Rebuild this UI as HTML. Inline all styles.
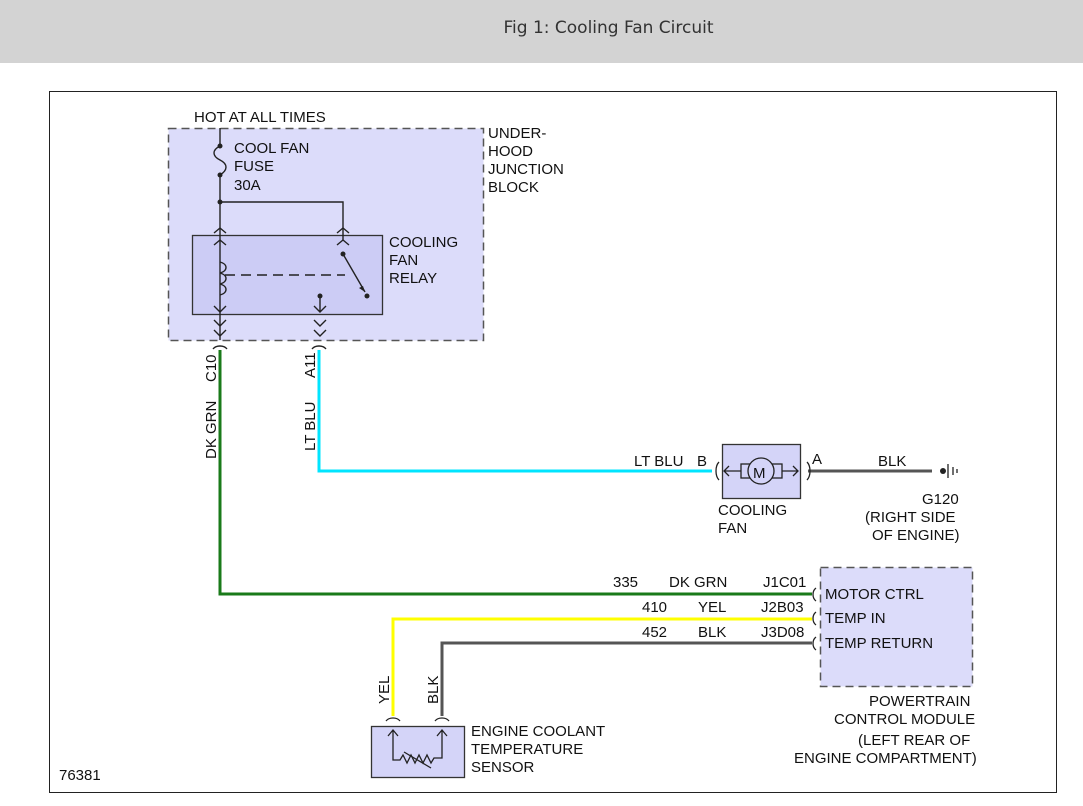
<!DOCTYPE html>
<html><head><style>
body{margin:0;width:1083px;height:806px;background:#fff;overflow:hidden;font-family:"Liberation Sans",sans-serif}
.t{position:absolute;left:0;top:0;width:1083px;height:63px;background:#d3d3d3;color:#333;font-family:"DejaVu Sans",sans-serif;font-size:17px;text-align:center;line-height:57px;padding-left:134px;box-sizing:border-box}
svg{position:absolute;left:0;top:0}
text{font-family:"Liberation Sans",sans-serif;font-size:15px;fill:#111}
</style></head><body>
<div class="t">Fig 1: Cooling Fan Circuit</div>
<svg width="1083" height="806" viewBox="0 0 1083 806">
<rect x="49.5" y="91.5" width="1007" height="701" fill="none" stroke="#222" stroke-width="1"/>
<rect x="168.5" y="128.5" width="315" height="212" fill="#dcdcfa" stroke="#555" stroke-width="1.5" stroke-dasharray="8,5"/>
<rect x="192.5" y="235.5" width="190" height="79" fill="#ccccf5" stroke="#333" stroke-width="1.3"/>
<text x="194" y="122">HOT AT ALL TIMES</text>
<text x="234" y="153">COOL FAN</text><text x="234" y="171">FUSE</text><text x="234" y="190">30A</text>
<text x="488" y="138">UNDER-</text><text x="488" y="156">HOOD</text><text x="488" y="174">JUNCTION</text><text x="488" y="192">BLOCK</text>
<text x="389" y="247">COOLING</text><text x="389" y="265">FAN</text><text x="389" y="283">RELAY</text>
<g stroke="#222" stroke-width="1.4" fill="none">
<path d="M220 128V146M220 175V340"/>
<path d="M220 146c-8 4-8 10 0 14c8 4 8 10 0 15"/>
<path d="M220 202H343V240"/>
<path d="M214 233l6-5 6 5M337 233l6-5 6 5M214 245l6-5 6 5M337 245l6-5 6 5"/>
<path d="M220 262c8 2 8 9 0 11c8 2 8 9 0 11c8 2 8 9 0 11"/>
<path d="M225 275H345" stroke-dasharray="10,6"/>
<path d="M343 254L365 292"/>
<path d="M320 296V312M214 306l6 6 6-6M314 306l6 6 6-6M214 320l6 6 6-6M314 320l6 6 6-6M214 330l6 6 6-6M314 330l6 6 6-6"/>
<path d="M213 349c3-4 11-4 14 0M312 349c3-4 11-4 14 0"/>
</g>
<g fill="#222"><circle cx="220" cy="146" r="2.5"/><circle cx="220" cy="175" r="2.5"/><circle cx="220" cy="202" r="2.5"/><circle cx="343" cy="254" r="2.5"/><circle cx="367" cy="296" r="2.5"/><circle cx="320" cy="296" r="2.5"/>
<path d="M365 292l-6-4 4-2z"/></g>
<path d="M220 350V594H812" stroke="#1a7a1a" stroke-width="3" fill="none"/>
<path d="M319 350V471H712" stroke="#00e5ff" stroke-width="3" fill="none"/>
<path d="M808 471H932" stroke="#555" stroke-width="3" fill="none"/>
<path d="M812 619H393V716" stroke="#ffff00" stroke-width="3" fill="none"/>
<path d="M812 643H442V716" stroke="#555" stroke-width="3" fill="none"/>
<text transform="translate(216 382) rotate(-90)">C10</text>
<text transform="translate(216 459) rotate(-90)">DK GRN</text>
<text transform="translate(315 378) rotate(-90)">A11</text>
<text transform="translate(315 451) rotate(-90)">LT BLU</text>
<text x="634" y="466">LT BLU</text><text x="697" y="466">B</text><text x="812" y="464">A</text><text x="878" y="466">BLK</text>
<rect x="722.5" y="444.5" width="78" height="54" fill="#d4d4f8" stroke="#333" stroke-width="1.3"/>
<g stroke="#222" stroke-width="1.3" fill="none">
<path d="M719 462c-4 4-4 14 0 18M807 462c4 4 4 14 0 18"/>
<path d="M724 471H741M782 471H798M729 466l-5 5 5 5M793 466l5 5-5 5"/>
<rect x="741" y="464" width="41" height="14"/>
<circle cx="761" cy="471" r="13" fill="#d4d4f8"/>
<path d="M948 464v14M953 467v8M957 469v4"/>
</g>
<text x="753" y="478" font-size="18">M</text>
<circle cx="943" cy="471" r="3" fill="#222"/>
<text x="718" y="515">COOLING</text><text x="718" y="533">FAN</text>
<text x="922" y="504">G120</text><text x="865" y="522">(RIGHT SIDE</text><text x="872" y="540">OF ENGINE)</text>
<rect x="820.5" y="567.5" width="152" height="119" fill="#dcdcfa" stroke="#555" stroke-width="1.5" stroke-dasharray="8,5"/>
<g stroke="#222" stroke-width="1.3" fill="none"><path d="M816 588c-4 3-4 10 0 13M816 612c-4 3-4 10 0 13M816 637c-4 3-4 10 0 13"/></g>
<text x="825" y="599">MOTOR CTRL</text><text x="825" y="623">TEMP IN</text><text x="825" y="648">TEMP RETURN</text>
<text x="613" y="587">335</text><text x="669" y="587">DK GRN</text><text x="763" y="587">J1C01</text>
<text x="642" y="612">410</text><text x="698" y="612">YEL</text><text x="761" y="612">J2B03</text>
<text x="642" y="637">452</text><text x="698" y="637">BLK</text><text x="761" y="637">J3D08</text>
<text x="869" y="706">POWERTRAIN</text><text x="834" y="724">CONTROL MODULE</text>
<text x="858" y="745">(LEFT REAR OF</text><text x="794" y="763">ENGINE COMPARTMENT)</text>
<text transform="translate(389 704) rotate(-90)">YEL</text>
<text transform="translate(438 704) rotate(-90)">BLK</text>
<rect x="371.5" y="726.5" width="93" height="51" fill="#d4d4f8" stroke="#333" stroke-width="1.3"/>
<g stroke="#222" stroke-width="1.3" fill="none">
<path d="M386 721c3-4 11-4 14 0M435 721c3-4 11-4 14 0"/>
<path d="M393 730V760H400l3-5 4 8 4-8 4 8 4-8 4 8 4-8 4 8 3-5H442V730M388 736l5-6 5 6M437 736l5-6 5 6"/>
<path d="M404 752L431 768"/>
</g>
<text x="471" y="736">ENGINE COOLANT</text><text x="471" y="754">TEMPERATURE</text><text x="471" y="772">SENSOR</text>
<text x="59" y="780">76381</text>
</svg>
</body></html>
